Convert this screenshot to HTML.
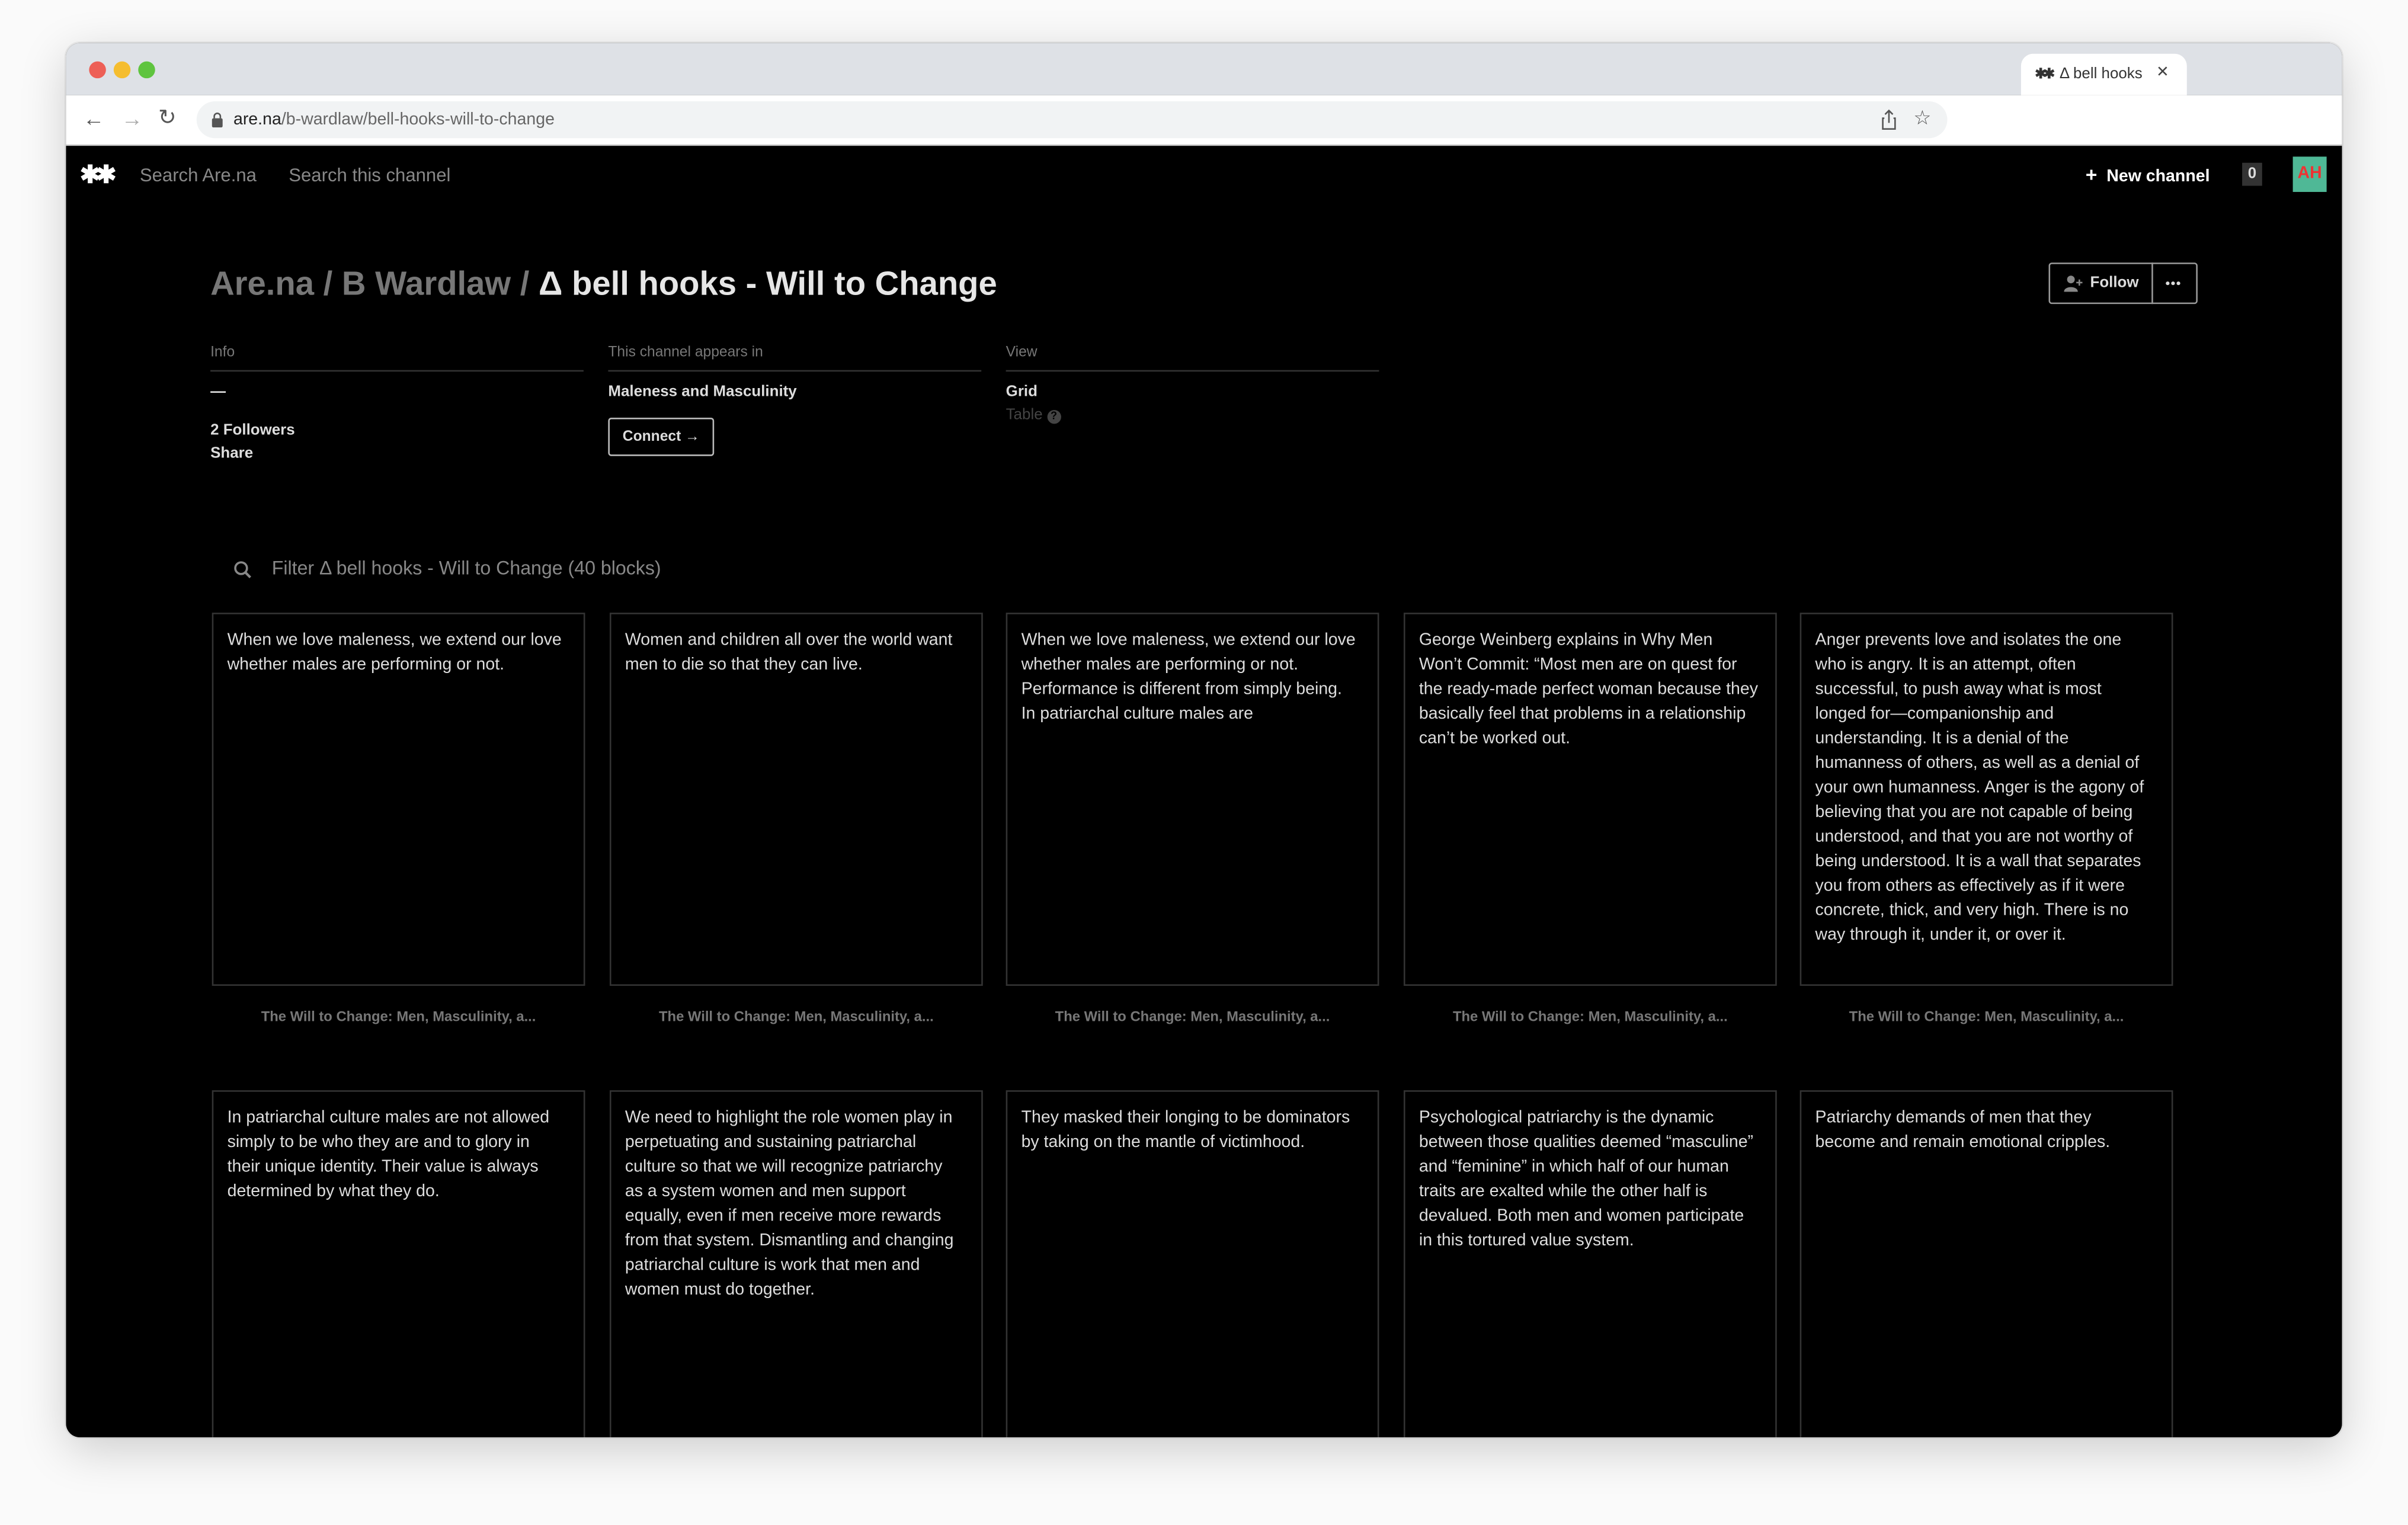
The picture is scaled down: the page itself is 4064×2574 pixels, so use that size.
<!DOCTYPE html>
<html><head><meta charset="utf-8"><style>
*{margin:0;padding:0;box-sizing:border-box}
html,body{width:4064px;height:2574px;overflow:hidden;background:#fff}
#w{position:absolute;left:0;top:0;width:1568px;height:993px;transform:scale(2.59184);transform-origin:0 0;font-family:"Liberation Sans",Arial,sans-serif;background:#fafafa}
.win{position:absolute;left:43px;top:28px;width:1482px;height:908px;border-radius:9px;overflow:hidden;box-shadow:0 8px 30px rgba(0,0,0,.18),0 0 0 1px rgba(0,0,0,.06);background:#000}
.tabbar{position:absolute;left:0;top:0;width:100%;height:34px;background:#dee1e6}
.dot{position:absolute;top:12px;width:11px;height:11px;border-radius:50%}
.tab{position:absolute;left:1273px;top:7px;width:108px;height:27px;background:#fff;border-radius:8px 8px 0 0;font-size:10px;color:#333;padding:8px 0 0 9px}
.toolbar{position:absolute;left:0;top:34px;width:100%;height:33px;background:#fff;border-bottom:1px solid #ccc}
.addr{position:absolute;left:85px;top:4px;width:1140px;height:24px;background:#f1f3f4;border-radius:12px}
.abs{position:absolute}
.page{position:absolute;left:0;top:67px;width:100%;height:841px;background:#000;overflow:hidden}
.lbl{position:absolute;font-size:9.5px;color:#777}
.rule{position:absolute;height:1px;background:#333;width:243px;top:146px}
.b{font-weight:bold;color:#ddd;font-size:10px;position:absolute}
.card{position:absolute;width:243px;height:243px;border:1px solid #333;padding:9px 12px 9px 9px;font-size:11px;line-height:16px;color:#ddd;overflow:hidden}
.cap{position:absolute;width:243px;text-align:center;font-size:9.2px;font-weight:bold;color:#777}
</style></head><body><div id="w">
<div class="win">
 <div class="tabbar">
  <div class="dot" style="left:15px;background:#ed5f56"></div>
  <div class="dot" style="left:31px;background:#f5bd2f"></div>
  <div class="dot" style="left:47px;background:#5fc43f"></div>
  <div class="tab"><b style="font-size:9px;letter-spacing:-2px">✱✱</b>&nbsp; Δ bell hooks <span style="position:absolute;left:88px;top:7px;color:#444">✕</span></div>
 </div>
 <div class="toolbar">
  <div class="abs" style="left:11px;top:7px;font-size:14px;color:#555">←</div>
  <div class="abs" style="left:36px;top:7px;font-size:14px;color:#aaa">→</div>
  <div class="abs" style="left:60px;top:6px;font-size:14px;color:#555">↻</div>
  <div class="addr">
   <svg class="abs" style="left:10px;top:7px" width="7" height="10" viewBox="0 0 7 10"><rect x="0" y="4" width="7" height="6" rx="1" fill="#555"/><path d="M1.5 4V2.8a2 2 0 0 1 4 0V4" stroke="#555" fill="none"/></svg>
   <div class="abs" style="left:24px;top:6px;font-size:11px;color:#222">are.na<span style="color:#666">/b-wardlaw/bell-hooks-will-to-change</span></div>
   <svg class="abs" style="left:1097px;top:5px" width="10" height="14" viewBox="0 0 10 14"><path d="M5 1v8M2.5 3.5L5 1l2.5 2.5M2 6H1v7h8V6H8" stroke="#555" fill="none"/></svg>
   <div class="abs" style="left:1118px;top:3px;font-size:13px;color:#555">☆</div>
  </div>
 </div>
 <div class="page">
  <div class="abs" style="left:9px;top:9px;font-size:16px;color:#fff;font-weight:bold;letter-spacing:-3px">✱✱</div>
  <div class="abs" style="left:48px;top:12px;font-size:12px;color:#888">Search Are.na</div>
  <div class="abs" style="left:145px;top:12px;font-size:12px;color:#888">Search this channel</div>
  <div class="abs" style="left:1315px;top:11px;font-size:11px;color:#fff;font-weight:bold"><span style="font-size:13px">+</span>&nbsp; New channel</div>
  <div class="abs" style="left:1417px;top:11px;width:13px;height:15px;background:#333;color:#ddd;font-size:10px;font-weight:bold;text-align:center;line-height:15px">0</div>
  <div class="abs" style="left:1450px;top:7px;width:22px;height:23px;background:#4fb896;color:#e33;font-size:11px;font-weight:bold;text-align:center;line-height:23px">AH</div>

  <div class="abs" style="left:94px;top:77px;font-size:21.7px;font-weight:bold;color:#777;white-space:nowrap">Are.na / B Wardlaw / <span style="color:#e6e6e6">Δ bell hooks - Will to Change</span></div>

  <div class="abs" style="left:1291px;top:76px;width:97px;height:27px;border:1px solid #999;border-radius:2px"></div>
  <div class="abs" style="left:1358px;top:76px;width:1px;height:27px;background:#999"></div>
  <svg class="abs" style="left:1301px;top:84px" width="12" height="11" viewBox="0 0 12 11"><circle cx="4.5" cy="3" r="2.5" fill="#888"/><path d="M0 11c0-4 9-4 9 0z" fill="#888"/><path d="M10 3v4M8 5h4" stroke="#888"/></svg>
  <div class="abs" style="left:1318px;top:84px;font-size:10px;font-weight:bold;color:#ddd">Follow</div>
  <svg class="abs" style="left:1367px;top:88px" width="10" height="3" viewBox="0 0 10 3"><circle cx="1.5" cy="1.5" r="1.2" fill="#ddd"/><circle cx="5" cy="1.5" r="1.2" fill="#ddd"/><circle cx="8.5" cy="1.5" r="1.2" fill="#ddd"/></svg>

  <div class="lbl" style="left:94px;top:129px">Info</div>
  <div class="lbl" style="left:353px;top:129px">This channel appears in</div>
  <div class="lbl" style="left:612px;top:129px">View</div>
  <div class="rule" style="left:94px"></div>
  <div class="rule" style="left:353px"></div>
  <div class="rule" style="left:612px"></div>
  <div class="b" style="left:94px;top:155px">—</div>
  <div class="b" style="left:94px;top:180px">2 Followers</div>
  <div class="b" style="left:94px;top:195px">Share</div>
  <div class="b" style="left:353px;top:155px">Maleness and Masculinity</div>
  <div class="abs" style="left:353px;top:177px;width:69px;height:25px;border:1px solid #bbb;border-radius:2px;color:#ddd;font-size:9.5px;font-weight:bold;text-align:center;line-height:23px">Connect →</div>
  <div class="b" style="left:612px;top:155px">Grid</div>
  <div class="abs" style="left:612px;top:170px;font-size:10px;color:#444">Table <span style="display:inline-block;width:9px;height:9px;border-radius:50%;background:#444;color:#000;font-size:7px;text-align:center;line-height:9px;font-weight:bold">?</span></div>

  <svg class="abs" style="left:109px;top:270px" width="12" height="12" viewBox="0 0 12 12"><circle cx="5" cy="5" r="3.8" stroke="#888" stroke-width="1.4" fill="none"/><path d="M8 8l3 3" stroke="#888" stroke-width="1.6"/></svg>
  <div class="abs" style="left:134px;top:268px;font-size:12.4px;color:#888">Filter Δ bell hooks - Will to Change (40 blocks)</div>

  <div class="card" style="left:95px;top:304px">When we love maleness, we extend our love whether males are performing or not.</div>
  <div class="card" style="left:354px;top:304px">Women and children all over the world want men to die so that they can live.</div>
  <div class="card" style="left:612px;top:304px">When we love maleness, we extend our love whether males are performing or not. Performance is different from simply being. In patriarchal culture males are</div>
  <div class="card" style="left:871px;top:304px;white-space:nowrap;padding-right:4px">George Weinberg explains in Why Men<br>Won’t Commit: “Most men are on quest for<br>the ready-made perfect woman because they<br>basically feel that problems in a relationship<br>can’t be worked out.</div>
  <div class="card" style="left:1129px;top:304px">Anger prevents love and isolates the one who is angry. It is an attempt, often successful, to push away what is most longed for—companionship and understanding. It is a denial of the humanness of others, as well as a denial of your own humanness. Anger is the agony of believing that you are not capable of being understood, and that you are not worthy of being understood. It is a wall that separates you from others as effectively as if it were concrete, thick, and very high. There is no way through it, under it, or over it.</div>
  <div class="cap" style="left:95px;top:562px">The Will to Change: Men, Masculinity, a...</div>
  <div class="cap" style="left:354px;top:562px">The Will to Change: Men, Masculinity, a...</div>
  <div class="cap" style="left:612px;top:562px">The Will to Change: Men, Masculinity, a...</div>
  <div class="cap" style="left:871px;top:562px">The Will to Change: Men, Masculinity, a...</div>
  <div class="cap" style="left:1129px;top:562px">The Will to Change: Men, Masculinity, a...</div>

  <div class="card" style="left:95px;top:615px">In patriarchal culture males are not allowed simply to be who they are and to glory in their unique identity. Their value is always determined by what they do.</div>
  <div class="card" style="left:354px;top:615px">We need to highlight the role women play in perpetuating and sustaining patriarchal culture so that we will recognize patriarchy as a system women and men support equally, even if men receive more rewards from that system. Dismantling and changing patriarchal culture is work that men and women must do together.</div>
  <div class="card" style="left:612px;top:615px">They masked their longing to be dominators by taking on the mantle of victimhood.</div>
  <div class="card" style="left:871px;top:615px">Psychological patriarchy is the dynamic between those qualities deemed “masculine” and “feminine” in which half of our human traits are exalted while the other half is devalued. Both men and women participate in this tortured value system.</div>
  <div class="card" style="left:1129px;top:615px">Patriarchy demands of men that they become and remain emotional cripples.</div>
 </div>
</div>
</div></body></html>
